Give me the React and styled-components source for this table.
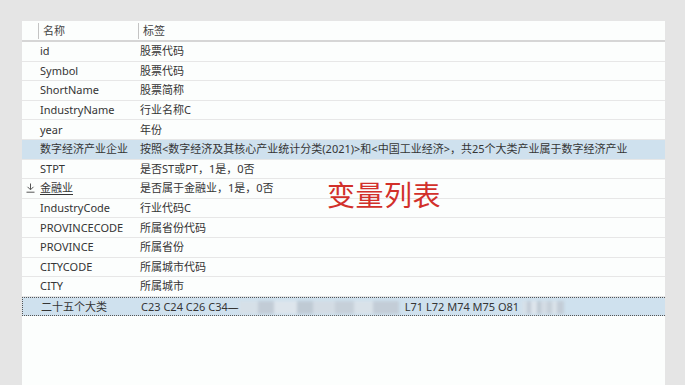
import styled, { createGlobalStyle } from "styled-components";

const GlobalStyle = createGlobalStyle`
  html, body {
    margin: 0;
    padding: 0;
    background: #e5e5e5;
  }
  body {
    font-family: "Noto Sans", "Noto Sans CJK SC", sans-serif;
    font-size: 11px;
    color: #353535;
  }
`;

const Page = styled.div`
  height: 385px;
  padding: 21px 20px 0 22px;
  box-sizing: border-box;
  overflow: hidden;
`;

const Panel = styled.div`
  position: relative;
  height: 364px;
  background: #fcfefd;
`;

const Row = styled.div`
  display: grid;
  grid-template-columns: 16px 100px 1fr;
  align-items: center;
  height: ${(p) => (p.$header ? "21px" : "19.6px")};
  box-sizing: border-box;
  border-bottom: ${(p) => (p.$header ? "2px solid #d6d6d6" : "1px solid #e7e7e7")};
  background: ${(p) => (p.$active ? "#cfe1ee" : "transparent")};
  ${(p) =>
    p.$focused &&
    `
    border-top: 1px dotted #555;
    border-bottom: 1px dotted #555;
    border-left: 1px dotted #555;
  `}
  white-space: nowrap;
`;

const Gutter = styled.div`
  display: flex;
  align-items: center;
  justify-content: flex-end;
  padding-right: 3px;
  height: 100%;
`;

const HeadCell = styled.div`
  height: 16px;
  line-height: 16px;
  border-left: 1px solid #c4c4c4;
  padding-left: 4px;
  color: #444;
`;

const Cell = styled.div`
  padding-left: 2px;
  line-height: 18px;
  overflow: hidden;
  text-decoration: ${(p) => (p.$underline ? "underline" : "none")};
  text-underline-offset: 2px;
`;

// pixelated, blurred-out stretch of the code list
const Mosaic = styled.span`
  display: inline-block;
  vertical-align: middle;
  width: ${(p) => p.$w}px;
  height: 13px;
  margin: 0 ${(p) => p.$gap || 2}px 0 0;
  background: linear-gradient(
    90deg,
    #d6e0e8 0 12%,
    #c2ccd6 12% 22%,
    #dde5ec 22% 36%,
    #bfcad4 36% 46%,
    #d3dce4 46% 60%,
    #c6d0d9 60% 72%,
    #d9e2e9 72% 84%,
    #c3cdd7 84% 100%
  );
  filter: blur(1.6px);
`;

const Stamp = styled.div`
  position: absolute;
  left: 305px;
  top: 157px;
  font-family: "Noto Sans CJK SC", sans-serif;
  font-size: 28px;
  line-height: 32px;
  color: #d2302a;
  letter-spacing: 0.5px;
`;

const PinIcon = () => (
  <svg width="9" height="10" viewBox="0 0 9 10" fill="none" stroke="#555" strokeWidth="1">
    <path d="M4.5 0.5V6.5" />
    <path d="M1.5 3.8L4.5 6.8L7.5 3.8" />
    <path d="M0.5 9.2H8.5" />
  </svg>
);

const rows = [
  ["id", "股票代码"],
  ["Symbol", "股票代码"],
  ["ShortName", "股票简称"],
  ["IndustryName", "行业名称C"],
  ["year", "年份"],
  [
    "数字经济产业企业",
    "按照<数字经济及其核心产业统计分类(2021)>和<中国工业经济>，共25个大类产业属于数字经济产业",
    { active: true },
  ],
  ["STPT", "是否ST或PT，1是，0否"],
  ["金融业", "是否属于金融业，1是，0否", { pinned: true }],
  ["IndustryCode", "行业代码C"],
  ["PROVINCECODE", "所属省份代码"],
  ["PROVINCE", "所属省份"],
  ["CITYCODE", "所属城市代码"],
  ["CITY", "所属城市"],
];

export default function App() {
  return (
    <>
      <GlobalStyle />
      <Page>
        <Panel>
          <Row $header>
            <Gutter />
            <HeadCell>名称</HeadCell>
            <HeadCell>标签</HeadCell>
          </Row>
          {rows.map(([name, label, opts = {}]) => (
            <Row key={name} $active={opts.active}>
              <Gutter>{opts.pinned && <PinIcon />}</Gutter>
              <Cell $underline={opts.pinned}>{name}</Cell>
              <Cell>{label}</Cell>
            </Row>
          ))}
          <Row $active $focused>
            <Gutter />
            <Cell>二十五个大类</Cell>
            <Cell>
              C23 C24 C26 C34—
              <Mosaic $w={160} $gap={6} />
              L71 L72 M74 M75 O81{" "}
              <Mosaic $w={42} />
            </Cell>
          </Row>
          <Stamp>变量列表</Stamp>
        </Panel>
      </Page>
    </>
  );
}
